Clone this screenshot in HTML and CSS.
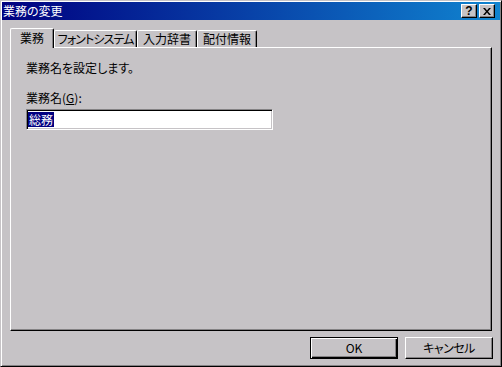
FILE: index.html
```html
<!DOCTYPE html>
<html lang="ja">
<head>
<meta charset="utf-8">
<title>業務の変更</title>
<link rel="stylesheet" href="styles.css">
</head>
<body>
<div class="window">
  <div class="titlebar">
    <span class="title">業務の変更</span>
    <div class="tb-buttons">
      <div class="tb-btn help">?</div>
      <div class="tb-btn close">
        <svg width="8" height="7" viewBox="0 0 8 7"><path d="M0 0h2l2 2.5L6 0h2L5 3.5 8 7H6L4 4.5 2 7H0l3-3.5z" fill="#000"/></svg>
      </div>
    </div>
  </div>
  <div class="content">
    <div class="tabs">
      <div class="tab active w1">業務</div>
      <div class="tab w2">フォントシステム</div>
      <div class="tab w3">入力辞書</div>
      <div class="tab w4">配付情報</div>
    </div>
    <div class="panel">
      <p class="desc">業務名を設定します。</p>
      <div class="label">業務名(<u>G</u>):</div>
      <div class="input"><span class="sel">総務</span></div>
    </div>
    <div class="buttons">
      <div class="btn default">OK</div>
      <div class="btn narrow">キャンセル</div>
    </div>
  </div>
</div>
</body>
</html>
```

FILE: styles.css
```css
html, body {
  margin: 0;
  padding: 0;
  background: #c6c3c6;
}
body {
  font-family: "Noto Sans CJK JP", "Noto Sans", sans-serif;
  font-size: 12px;
  color: #000;
  font-feature-settings: "palt";
}
.window {
  width: 502px;
  height: 367px;
  box-sizing: border-box;
  background: #c6c3c6;
  border: 1px solid;
  border-color: #c6c3c6 #000 #000 #c6c3c6;
  box-shadow: inset 1px 1px #fff, inset -1px -1px #848284;
  padding: 1px;
  display: flex;
  flex-direction: column;
}
.titlebar {
  height: 18px;
  flex: none;
  background: linear-gradient(to right, #000080, #1084d0);
  display: flex;
  align-items: center;
  justify-content: space-between;
  padding: 0 5px 0 1px;
}
.title {
  color: #fff;
  font-size: 12px;
  line-height: 16px;
}
.tb-buttons {
  display: flex;
  gap: 2px;
}
.tb-btn {
  width: 16px;
  height: 14px;
  box-sizing: border-box;
  background: #c6c3c6;
  border: 1px solid;
  border-color: #fff #000 #000 #fff;
  box-shadow: inset -1px -1px #848284;
  display: flex;
  align-items: center;
  justify-content: center;
  font-family: "Liberation Sans", sans-serif;
  font-weight: bold;
  font-size: 12px;
  line-height: 12px;
}
.tb-btn.help {
  padding-bottom: 1px;
}
.content {
  flex: 1;
  display: flex;
  flex-direction: column;
  padding: 8px 8px 0 8px;
}
.tabs {
  display: flex;
  align-items: flex-end;
  height: 19px;
  position: relative;
  z-index: 1;
}
.tab {
  height: 17px;
  box-sizing: border-box;
  border-top: 1px solid #fff;
  border-left: 1px solid #fff;
  border-right: 1px solid #000;
  box-shadow: inset -1px 0 #848284;
  border-radius: 2px 2px 0 0;
  background: #c6c3c6;
  text-align: center;
  line-height: 15px;
  white-space: nowrap;
}
.tab.active {
  height: 20px;
  margin-bottom: -1px;
  line-height: 17px;
}
.w1 { width: 44px; }
.w2 { width: 83px; letter-spacing: -0.9px; }
.w3 { width: 60px; }
.w4 { width: 60px; }
.panel {
  height: 284px;
  box-sizing: border-box;
  border: 1px solid;
  border-color: #fff #000 #000 #fff;
  box-shadow: inset -1px -1px #848284;
  padding: 12px 15px;
}
.desc {
  margin: 0;
  line-height: 16px;
}
.label {
  margin-top: 14px;
  line-height: 16px;
}
.label u {
  text-underline-offset: 1px;
}
.input {
  margin-top: 3px;
  width: 247px;
  height: 21px;
  box-sizing: border-box;
  background: #fff;
  border: 1px solid;
  border-color: #848284 #fff #fff #848284;
  box-shadow: inset 1px 1px #000, inset -1px -1px #c6c3c6;
  padding: 1px;
  display: flex;
  align-items: center;
}
.sel {
  background: #000080;
  color: #fff;
  height: 15px;
  line-height: 15px;
  padding: 0 1px;
}
.buttons {
  display: flex;
  justify-content: flex-end;
  gap: 7px;
  margin-top: 6px;
  margin-right: -1px;
}
.btn {
  width: 88px;
  height: 22px;
  box-sizing: border-box;
  border: 1px solid;
  border-color: #fff #000 #000 #fff;
  box-shadow: inset -1px -1px #848284;
  display: flex;
  align-items: center;
  justify-content: center;
  line-height: 16px;
}
.btn.narrow {
  letter-spacing: -0.5px;
}
.btn.default {
  border-color: #000;
  box-shadow: inset 1px 1px #fff, inset -1px -1px #000, inset -2px -2px #848284;
}
```
